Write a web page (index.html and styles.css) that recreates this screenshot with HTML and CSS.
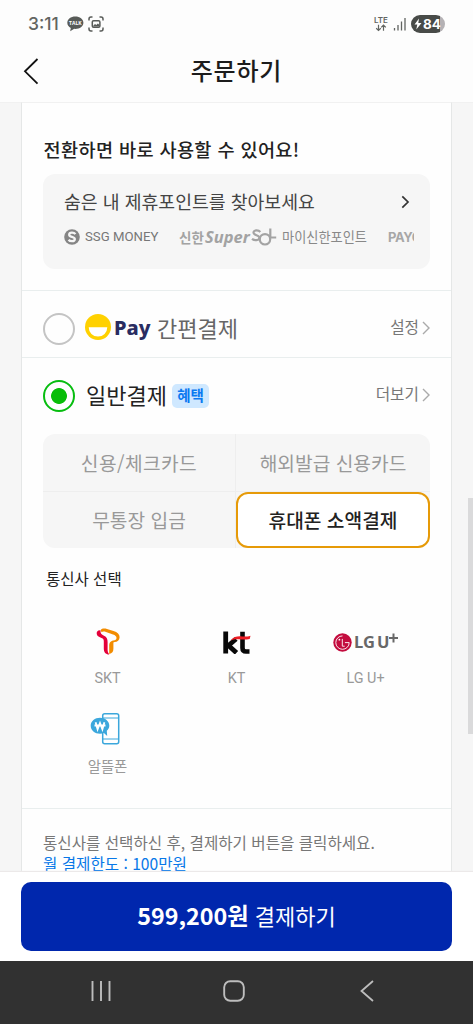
FILE: index.html
```html
<!DOCTYPE html>
<html lang="ko">
<head>
<meta charset="utf-8">
<meta name="viewport" content="width=device-width, initial-scale=1">
<title>주문하기</title>
<link rel="stylesheet" href="styles.css">
</head>
<body>
<div class="screen">
  <div class="status">
    <span class="clock">3:11</span>
    <svg class="talk" width="17" height="16" viewBox="0 0 17 16"><path d="M8.300 .5C3.800.5.300 3.100.300 6.700c0 2.300 1.400 4.200 3.500 5.300L3.200 15.300l4-2.500 1.100.1c4.500 0 8.100-2.700 8.100-6.200S12.800.5 8.300.5z" fill="#585b58"/><text x="8.300" y="8.800" class="talk-text">TALK</text></svg>
    <svg class="capture" width="16" height="16" viewBox="0 0 16 16" fill="none" stroke="#585b58" stroke-width="1.500"><path d="M1 4.500V3q0-2 2-2h1.500M11.500 1H13q2 0 2 2v1.500M15 11.500V13q0 2-2 2h-1.500M4.500 15H3q-2 0-2-2v-1.500"/><rect x="4.300" y="4.800" width="7.600" height="6.400" rx="1.300"/><path d="M5 10l2-2 1.300 1 1.600-1.500L11.500 9v1.500H5z" fill="#585b58" stroke="none"/></svg>
    <div class="status-right">
      <svg width="16" height="16" viewBox="0 0 16 16"><text x="8" y="7" class="lte">LTE</text><path d="M5.500 8.800v5.500M3.200 12.200l2.300 2.200 2.300-2.200M10.500 14.800V9.200M8.200 11.400l2.300-2.200 2.300 2.200" fill="none" stroke="#626562" stroke-width="1.200"/></svg>
      <svg class="signal" width="13" height="14" viewBox="0 0 13 14"><path d="M1.500 11v2.500M5 8v5.500M8.500 4.500v9M12 1v12.500" stroke="#626562" stroke-width="1.300"/></svg>
      <div class="battery"><svg width="8" height="12" viewBox="0 0 8 12"><path d="M5 .5L.5 6.500h2.800L2.300 11.500 7.500 5H4.300z" fill="#fff"/></svg><span>84</span></div>
    </div>
  </div>
  <header class="header">
    <svg class="back" width="16" height="28" viewBox="0 0 16 28"><path d="M14.500 2L2 14.300l12.500 12.300" fill="none" stroke="#111" stroke-width="1.800"/></svg>
    <h1 class="title">주문하기</h1>
  </header>
  <main class="main">
    <div class="card">
      <section class="points">
        <h2 class="points-title">전환하면 바로 사용할 수 있어요!</h2>
        <div class="points-box">
          <div class="points-link"><span>숨은 내 제휴포인트를 찾아보세요</span><svg width="9" height="14" viewBox="0 0 9 14"><path d="M1.300 1.300L7 7l-5.700 5.700" fill="none" stroke="#333" stroke-width="1.700"/></svg></div>
          <div class="brands">
            <svg class="ssg" width="16" height="16" viewBox="0 0 16 16"><circle cx="8" cy="8" r="7.800" fill="#858585"/><path d="M11.400 5.200C10 3.200 5.300 3.100 5.200 5.700c-.1 2.600 5.700 1.700 5.600 4.400-.1 2.700-4.800 2.500-6.200.6" fill="none" stroke="#f6f6f6" stroke-width="2.300"/></svg>
            <span class="ssg-name">SSG MONEY</span>
            <span class="shinhan">신한</span><span class="super">Super</span><svg class="sol" width="26" height="19" viewBox="0 0 26 19" fill="none" stroke="#a3a3a3" stroke-width="2.200"><path d="M9.300 4C7.500 1.800 2.500 1.900 2.500 4.600c0 3.200 6 2 5.900 5.200-.1 3-5 3-7.400 1"/><circle cx="14" cy="11.300" r="5.200"/><path d="M19.300 .5v9h5.900"/></svg>
            <span class="shinhan-point">마이신한포인트</span>
            <span class="payco">PAYCO</span>
          </div>
        </div>
      </section>
      <section class="method easy">
        <span class="radio"></span>
        <svg class="smile" width="26" height="26" viewBox="0 0 26 26"><circle cx="13" cy="13" r="13" fill="#ffd100"/><path d="M3.700 13.300h18.600a9.300 9.300 0 0 1-18.600 0z" fill="#fff"/></svg>
        <span class="pay">Pay</span><span class="method-name easy-name">간편결제</span>
        <span class="more">설정</span><svg class="chev" width="8" height="14" viewBox="0 0 8 14"><path d="M1 1l6 6-6 6" fill="none" stroke="#aaa" stroke-width="1.400"/></svg>
      </section>
      <section class="method normal">
        <span class="radio checked"></span>
        <span class="method-name normal-name">일반결제</span><span class="badge">혜택</span>
        <span class="more">더보기</span><svg class="chev" width="8" height="14" viewBox="0 0 8 14"><path d="M1 1l6 6-6 6" fill="none" stroke="#aaa" stroke-width="1.400"/></svg>
      </section>
      <div class="tabs">
        <div class="tab right bottom"><span class="tab-card">신용/체크카드</span></div>
        <div class="tab bottom"><span class="tab-overseas">해외발급 신용카드</span></div>
        <div class="tab right"><span class="tab-bank">무통장 입금</span></div>
        <div class="tab selected"><span class="tab-phone">휴대폰 소액결제</span></div>
      </div>
      <h3 class="carrier-title">통신사 선택</h3>
      <div class="carriers">
        <div class="carrier">
          <svg class="skt" width="24" height="27" viewBox="0 0 24 27"><path d="M4.500 2.200C1.500 2 .2 4 .8 6.300c.6 2.200 2.500 2.800 4.700 3.600 1.900.7 2.300 1.700 2.300 3.600v7c0 3.800 1.700 6 5.500 6-1.200-1.500-1.700-3-1.700-5v-7.500c0-3.200-.8-5-3.600-6.300C5.500 6.500 4.200 5.300 4.500 2.200z" fill="#e4003a"/><path d="M4.700 2C6 .3 8.500.3 11 1l6.500 1.900c4 1.200 6.200 3.300 6.100 6.300-.1 3.200-2.200 4.500-5 4.900l-1.200.3v6.300c0 3-1.300 4.700-4.200 5.200v-7.600c0-3.700 1.200-5 4-5.700 2.300-.5 3.300-1.300 3.300-2.700 0-1.700-1.300-2.800-3.500-3.500L10 4C8 3.300 6.300 3.400 5.500 4.200z" fill="#f28c00"/></svg>
          <span class="carrier-name">SKT</span>
        </div>
        <div class="carrier">
          <svg width="28" height="23" viewBox="0 0 28 23"><path d="M2.700 .5v22M13 8L5.500 14.500l8 7.300" fill="none" stroke="#080808" stroke-width="4.800"/><path d="M19.500 .8v16.200q0 3.500 3.500 3.500h3.500" fill="none" stroke="#080808" stroke-width="4.600"/><path d="M7.500 9.500C11 5.300 15 5 19 5.400c3.200.3 5.200.2 8.500-.7l-.8 3.300c-3 .6-5.300.7-8.500.5-4-.3-7-.5-10.700 1z" fill="#ed1c24"/></svg>
          <span class="carrier-name">KT</span>
        </div>
        <div class="carrier">
          <div class="lg-logo"><svg width="19" height="19" viewBox="0 0 19 19"><circle cx="9.500" cy="9.500" r="9.200" fill="#c30c3e"/><path d="M9.500 2.900A6.700 6.700 0 1 0 16.200 9.600h-4.300M9.300 5.900v7.300h2.400" fill="none" stroke="#fff" stroke-width=".9"/><circle cx="6.400" cy="6.700" r=".9" fill="#fff"/></svg><span class="lg">LG</span><span class="lgu">U</span><svg class="plus" width="9" height="10" viewBox="0 0 9 10"><path d="M0 5h9M4.500.5v9" stroke="#686868" stroke-width="2"/></svg></div>
          <span class="carrier-name lg-name">LG U+</span>
        </div>
        <div class="carrier second">
          <svg class="phone" width="30" height="32" viewBox="0 0 30 32"><rect x="12.700" y=".8" width="16" height="30" rx="2" fill="#fff" stroke="#3ba7dc" stroke-width="1.500"/><path d="M13 5h15.500M13 26h15.500" stroke="#3ba7dc"/><path d="M10 4.800c-5.100 0-9.300 3.400-9.300 7.900s4.200 8 9.300 8c1.500 0 2.700-.2 3.900-.7l3.300 3-.4-5.200c1.500-1.300 2.500-3 2.500-5.100 0-4.500-4.200-7.900-9.300-7.900z" fill="#3ba7dc"/><path d="M5.600 9.300l2 7L10 10l2.400 6.300 2-7M4.500 12.500h11" fill="none" stroke="#fff" stroke-width="1.800"/></svg>
          <span class="carrier-name korean">알뜰폰</span>
        </div>
      </div>
      <div class="notice"><p class="notice-main">통신사를 선택하신 후, 결제하기 버튼을 클릭하세요.</p><p class="notice-limit">월 결제한도 : 100만원</p></div>
    </div>
    <div class="scrollbar"></div>
  </main>
  <footer class="footer"><button class="buy"><b>599,200원</b><span>결제하기</span></button></footer>
  <nav class="nav">
    <svg width="20" height="22" viewBox="0 0 20 22"><path d="M1.500 1v20M10 1v20M18.500 1v20" stroke="#bdbdbd" stroke-width="1.900"/></svg>
    <svg class="home" width="22" height="22" viewBox="0 0 22 22"><rect x="1.200" y="1.200" width="19.600" height="19.600" rx="6" fill="none" stroke="#bdbdbd" stroke-width="1.900"/></svg>
    <svg width="14" height="22" viewBox="0 0 14 22"><path d="M13 1L1.500 11 13 21" fill="none" stroke="#bdbdbd" stroke-width="1.800"/></svg>
  </nav>
</div>
</body>
</html>
```
FILE: styles.css
```css
* { box-sizing: border-box; }
body { margin: 0; font-family: "Noto Sans CJK KR", sans-serif; color: #222; }
h1, h2, h3, p { margin: 0; font-weight: 500; }
svg { display: block; flex: none; }
span, b { white-space: nowrap; }
.screen { width: 473px; height: 1024px; display: flex; flex-direction: column; overflow: hidden; background: #fdfdfd; }

.status { height: 48px; flex: none; display: flex; align-items: center; padding: 0 28px; }
.clock { font: 500 17.500px/20px Inter, sans-serif; color: #626562; width: 31px; }
.talk { margin-left: 8px; }
.talk-text { font: 700 5px "Open Sans", sans-serif; fill: #fff; text-anchor: middle; }
.capture { margin-left: 4px; }
.status-right { margin-left: auto; display: flex; align-items: center; }
.lte { font: 600 8px Inter, sans-serif; fill: #626562; text-anchor: middle; }
.signal { margin: 0 5px 0 4px; }
.battery { width: 34px; height: 18px; border-radius: 9px; background: linear-gradient(90deg, #484b48 84%, #b5b2b5 84%); color: #fff; display: flex; align-items: center; gap: 1px; padding-left: 3px; font: 700 13.500px/18px Inter, sans-serif; }

.header { height: 54px; flex: none; display: flex; align-items: center; padding: 0 23px; }
.back { margin-top: -9px; }
.title { flex: 1; text-align: center; font-size: 24px; line-height: 32px; letter-spacing: .8px; padding-right: 16px; margin-top: -11px; color: #1c1c1c; }

.main { position: relative; height: 770px; flex: none; background: #f6f6f6; padding: 0 21px; overflow: hidden; box-shadow: inset 0 1px #f1f1f1; }
.card { height: 780px; background: #fefefe; border: 1px solid #e5e7e7; border-top-color: #f1f1f1; border-bottom: 0; }
.scrollbar { position: absolute; right: 0; top: 396px; width: 5px; height: 236px; background: #dadadb; }

.points { height: 188px; padding: 32px 21px 0 21px; border-bottom: 1px solid #e9eeee; }
.points-title { font-size: 18.600px; line-height: 28px; letter-spacing: .36px; white-space: nowrap; padding-left: .5px; }
.points-box { height: 95px; margin-top: 11px; border-radius: 12px; background: #f6f6f6; padding: 14px 16px 0 21px; }
.points-link { display: flex; align-items: center; justify-content: space-between; font-size: 18.300px; line-height: 28px; color: #444; padding-right: 4px; }
.points-link span { margin-top: -1px; }
.brands { display: flex; align-items: center; height: 22px; margin-top: 11px; overflow: hidden; }
.ssg-name { margin-left: 5px; width: 74px; font: 400 13.200px/20px Roboto, sans-serif; color: #777; }
.shinhan { margin-left: 20px; width: 26px; font-size: 13.500px; line-height: 20px; font-weight: 700; color: #a3a3a3; }
.super { width: 46px; font: italic 700 16.500px/20px "Noto Sans", sans-serif; color: #a3a3a3; }
.shinhan-point { margin-left: 5px; width: 86px; font-size: 13.200px; line-height: 20px; margin-top: -1px; color: #888; }
.payco { margin-left: 20px; width: 26px; overflow: hidden; font: 700 13px/20px Inter, sans-serif; letter-spacing: -.4px; color: #a7a7a7; }

.method { display: flex; align-items: center; padding: 0 20px 0 21px; }
.easy { height: 67px; border-bottom: 1px solid #e9eeee; padding-top: 10px; }
.normal { height: 76px; }
.radio { width: 32px; height: 32px; flex: none; border: 2px solid #c4c4c4; border-radius: 50%; }
.checked { border-color: #07bd10; background: radial-gradient(circle, #08bd08 7.500px, #fefefe 8.300px); }
.smile { margin-left: 10px; margin-top: -4px; }
.pay { margin-left: 3px; width: 37px; margin-top: -3px; font: 800 20px/28px "Noto Sans", sans-serif; color: #292c61; }
.method-name { font-size: 22px; line-height: 30px; margin-top: -4px; }
.easy-name { margin-left: 6px; color: #666; }
.normal-name { margin-left: 11px; }
.badge { margin-left: 5px; width: 37px; height: 24px; border-radius: 5px; background: #cfe8ff; color: #0b79f1; font-size: 14.500px; font-weight: 700; line-height: 21px; text-align: center; }
.more { margin-left: auto; color: #777; font-size: 15.700px; line-height: 24px; margin-top: -4px; }
.chev { margin-left: 3px; margin-right: 1px; margin-top: -2px; }

.tabs { display: grid; grid-template-columns: 193px 194px; grid-template-rows: 58px 56px; margin-left: 21px; width: 387px; background: #f6f6f6; border-radius: 12px; }
.tab { display: flex; align-items: center; justify-content: center; font-size: 19.200px; line-height: 28px; color: #999; }
.tab-card { letter-spacing: .4px; }
.right { border-right: 1px solid #eeeeee; }
.bottom { border-bottom: 1px solid #eeeeee; }
.selected { background: #fff; border: 2px solid #e69a08; border-radius: 12px; color: #222; font-weight: 500; }

.carrier-title { margin: 18px 0 0 24px; font-size: 15.500px; line-height: 24px; font-weight: 400; }
.carriers { display: grid; grid-template-columns: repeat(3, 129px); grid-template-rows: 88px 88px; margin: 32px 0 0 21px; }
.carrier { display: flex; flex-direction: column; align-items: center; height: 67px; justify-content: space-between; padding-top: 6px; }
.carrier:nth-child(2) { padding-top: 9px; }
.carrier:nth-child(3) { padding-top: 10px; }
.carrier-name { font: 400 14.400px/20px Roboto, sans-serif; color: #999; }
.carrier.second { padding-top: 3px; height: 66px; }
.phone { margin-right: 6px; }
.korean { font: 400 14.400px/20px "Noto Sans CJK KR", sans-serif; }
.lg-logo { display: flex; align-items: center; }
.lg { margin-left: 2px; width: 23px; font: 700 16.500px/20px "Noto Sans", sans-serif; color: #686868; }
.lgu { width: 12px; font: 700 16.500px/20px "Noto Sans", sans-serif; color: #686868; }
.plus { margin-top: -8px; }

.notice { border-top: 1px solid #e9eeee; padding: 23px 20px 0 21px; white-space: nowrap; margin-top: 10px; }
.notice p { font-size: 15.600px; line-height: 21px; font-weight: 400; color: #777; }
.notice .notice-limit { color: #0878e8; }

.footer { height: 89px; flex: none; background: #fff; padding: 10px 21px; box-shadow: 0 -1px 1px #ece9e9; position: relative; }
.buy { display: flex; align-items: center; justify-content: center; gap: 6px; width: 431px; height: 69px; padding: 0 0 4px; border: 0; border-radius: 10px; background: #0027ad; color: #fff; font: 400 22px/30px "Noto Sans CJK KR", sans-serif; }
.buy b { font-size: 23.300px; }
.nav { height: 63px; flex: none; background: #313131; display: flex; justify-content: space-between; align-items: center; padding: 0 99px 3px 91px; }
.home { margin-right: 4px; }
```
